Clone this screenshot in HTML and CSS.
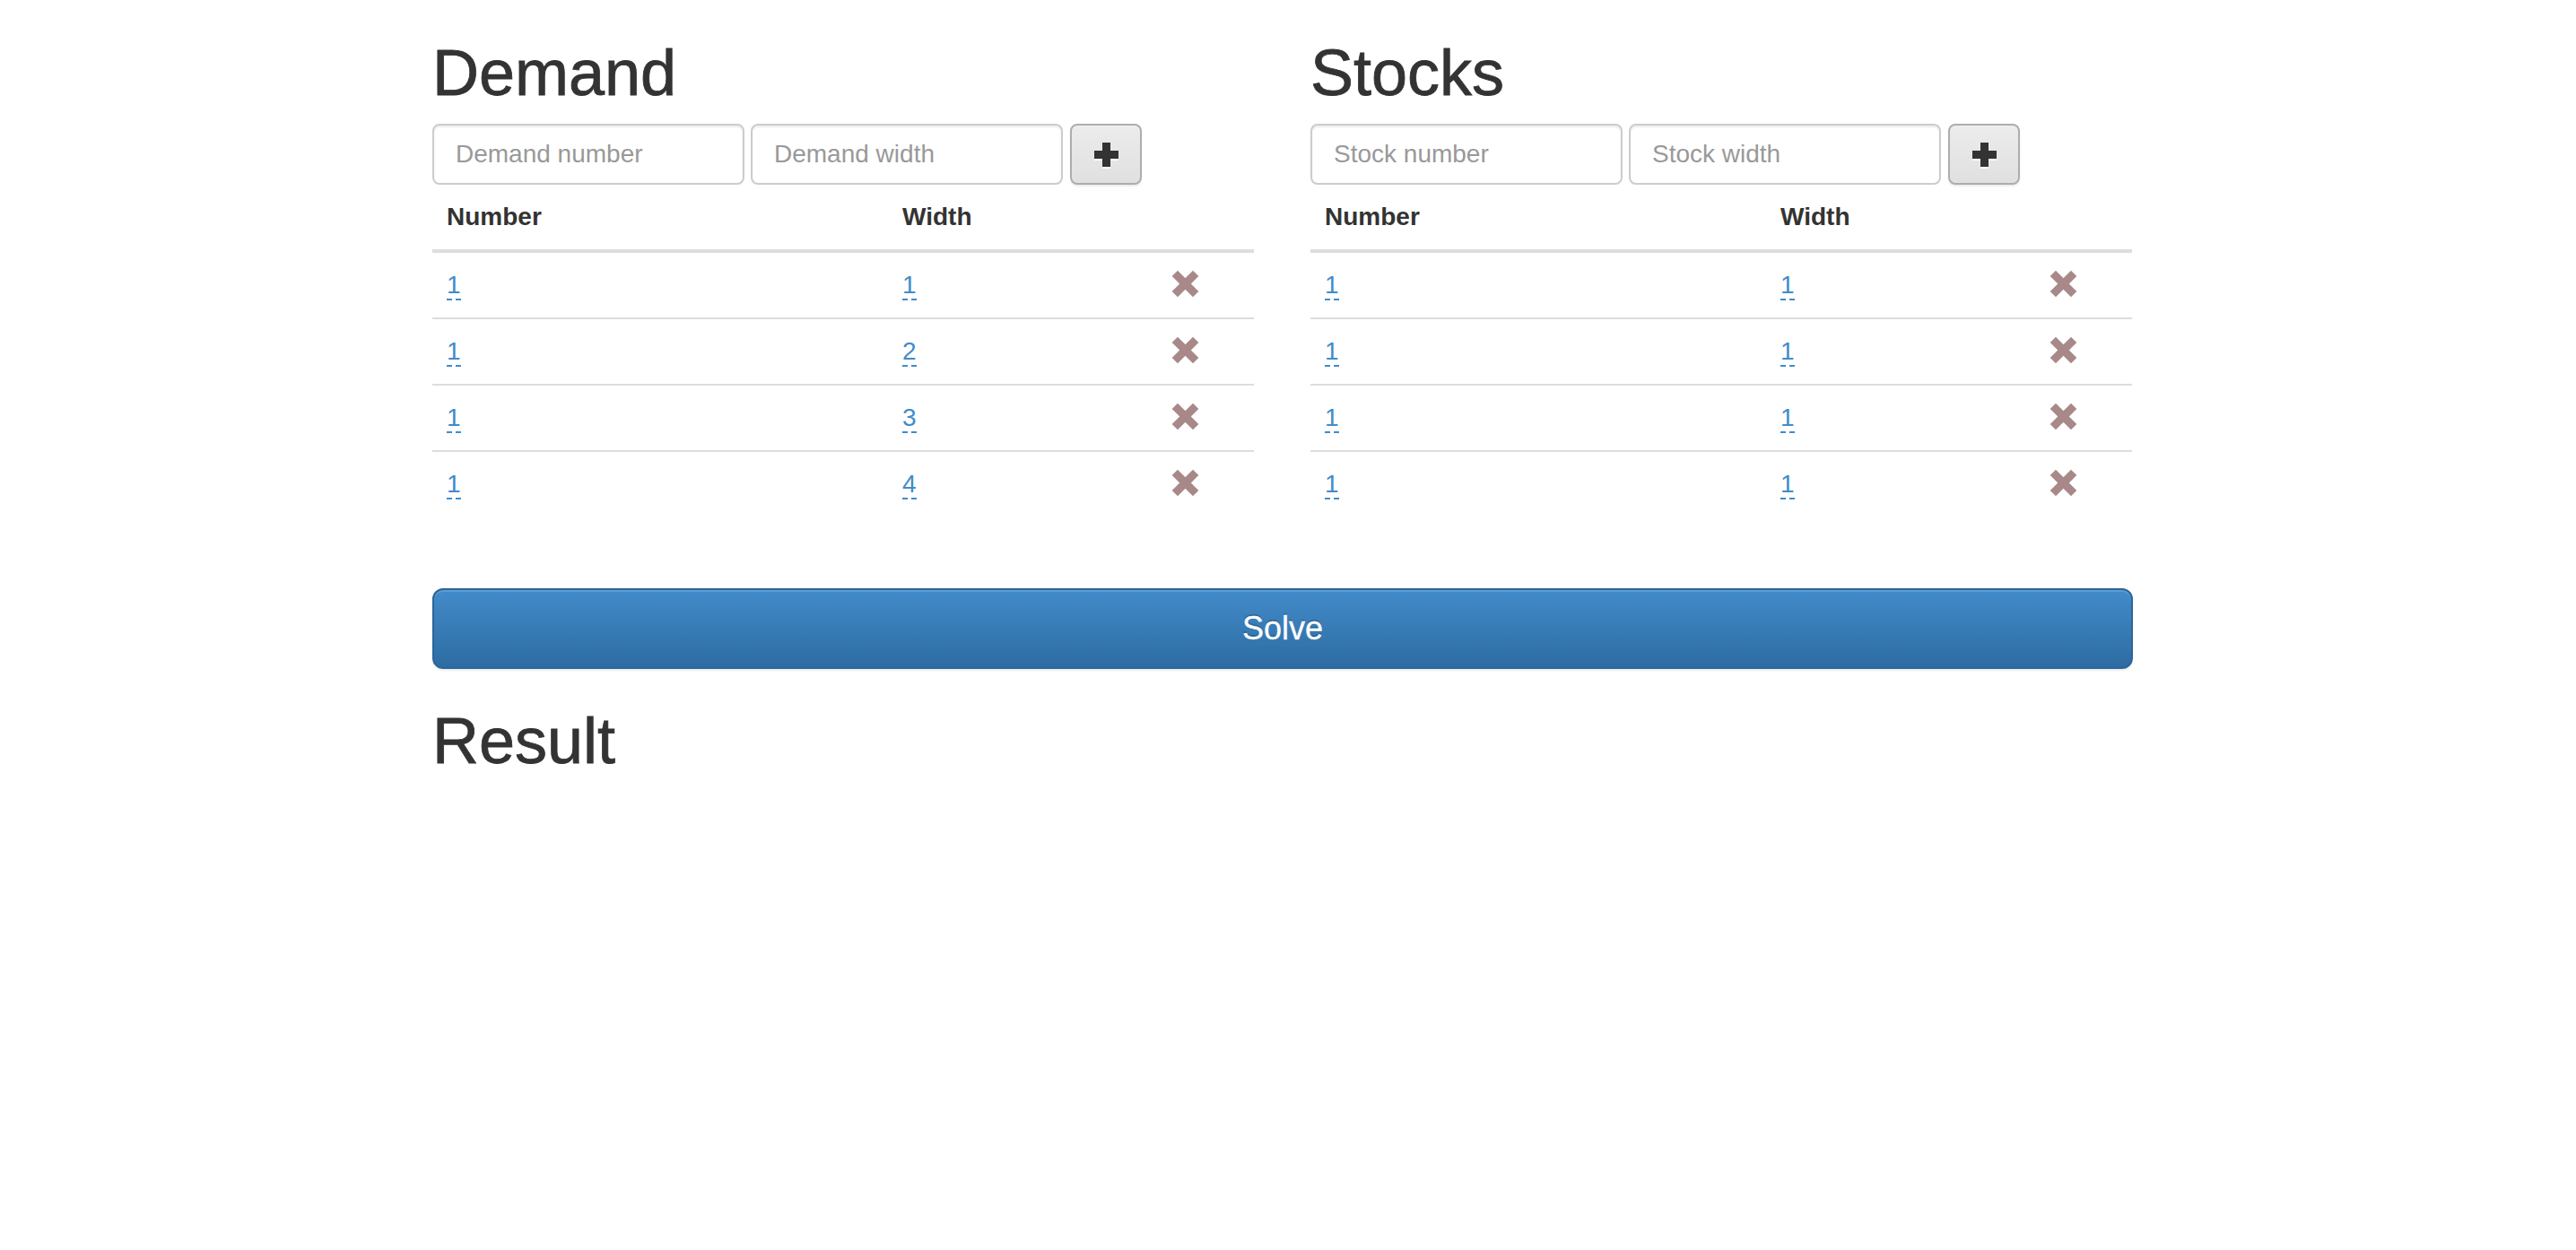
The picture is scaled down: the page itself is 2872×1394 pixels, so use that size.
FILE: index.html
```html
<!DOCTYPE html>
<html>
<head>
<meta charset="utf-8">
<title>Cutting stock</title>
<link rel="stylesheet" href="styles.css">
</head>
<body>
<div class="container">
  <div class="columns">
    <section class="col">
      <h1 class="heading">Demand</h1>
      <form class="add-form">
        <input class="field" type="text" placeholder="Demand number">
        <input class="field" type="text" placeholder="Demand width">
        <button class="btn-add" type="button" aria-label="Add">
          <svg class="plus" viewBox="0 0 27 27" width="27" height="27"><rect x="9" y="0" width="9" height="27"/><rect x="0" y="9" width="27" height="9"/></svg>
        </button>
      </form>
      <table class="data">
        <thead><tr><th class="c-num">Number</th><th class="c-wid">Width</th><th class="c-act"></th></tr></thead>
        <tbody>
          <tr><td><a class="editable">1</a></td><td><a class="editable">1</a></td><td><svg class="remove" viewBox="0 0 31 31" width="31" height="31"><g transform="rotate(45 15.5 15.5)"><rect x="11" y="-1" width="9" height="33"/><rect x="-1" y="11" width="33" height="9"/></g></svg></td></tr>
          <tr><td><a class="editable">1</a></td><td><a class="editable">2</a></td><td><svg class="remove" viewBox="0 0 31 31" width="31" height="31"><g transform="rotate(45 15.5 15.5)"><rect x="11" y="-1" width="9" height="33"/><rect x="-1" y="11" width="33" height="9"/></g></svg></td></tr>
          <tr><td><a class="editable">1</a></td><td><a class="editable">3</a></td><td><svg class="remove" viewBox="0 0 31 31" width="31" height="31"><g transform="rotate(45 15.5 15.5)"><rect x="11" y="-1" width="9" height="33"/><rect x="-1" y="11" width="33" height="9"/></g></svg></td></tr>
          <tr><td><a class="editable">1</a></td><td><a class="editable">4</a></td><td><svg class="remove" viewBox="0 0 31 31" width="31" height="31"><g transform="rotate(45 15.5 15.5)"><rect x="11" y="-1" width="9" height="33"/><rect x="-1" y="11" width="33" height="9"/></g></svg></td></tr>
        </tbody>
      </table>
    </section>
    <section class="col">
      <h1 class="heading">Stocks</h1>
      <form class="add-form">
        <input class="field" type="text" placeholder="Stock number">
        <input class="field" type="text" placeholder="Stock width">
        <button class="btn-add" type="button" aria-label="Add">
          <svg class="plus" viewBox="0 0 27 27" width="27" height="27"><rect x="9" y="0" width="9" height="27"/><rect x="0" y="9" width="27" height="9"/></svg>
        </button>
      </form>
      <table class="data">
        <thead><tr><th class="c-num">Number</th><th class="c-wid">Width</th><th class="c-act"></th></tr></thead>
        <tbody>
          <tr><td><a class="editable">1</a></td><td><a class="editable">1</a></td><td><svg class="remove" viewBox="0 0 31 31" width="31" height="31"><g transform="rotate(45 15.5 15.5)"><rect x="11" y="-1" width="9" height="33"/><rect x="-1" y="11" width="33" height="9"/></g></svg></td></tr>
          <tr><td><a class="editable">1</a></td><td><a class="editable">1</a></td><td><svg class="remove" viewBox="0 0 31 31" width="31" height="31"><g transform="rotate(45 15.5 15.5)"><rect x="11" y="-1" width="9" height="33"/><rect x="-1" y="11" width="33" height="9"/></g></svg></td></tr>
          <tr><td><a class="editable">1</a></td><td><a class="editable">1</a></td><td><svg class="remove" viewBox="0 0 31 31" width="31" height="31"><g transform="rotate(45 15.5 15.5)"><rect x="11" y="-1" width="9" height="33"/><rect x="-1" y="11" width="33" height="9"/></g></svg></td></tr>
          <tr><td><a class="editable">1</a></td><td><a class="editable">1</a></td><td><svg class="remove" viewBox="0 0 31 31" width="31" height="31"><g transform="rotate(45 15.5 15.5)"><rect x="11" y="-1" width="9" height="33"/><rect x="-1" y="11" width="33" height="9"/></g></svg></td></tr>
        </tbody>
      </table>
    </section>
  </div>
  <button class="btn-solve" type="button">Solve</button>
  <h1 class="heading result">Result</h1>
</div>
</body>
</html>
```

FILE: styles.css
```css
html, body {
  margin: 0;
  padding: 0;
  background: #fff;
}
body {
  font-family: "Liberation Sans", Helvetica, Arial, sans-serif;
  font-size: 28px;
  line-height: 40px;
  color: #333;
}
.container {
  width: 1896px;
  margin-left: 482px;
}
.columns {
  display: flex;
  gap: 63px;
}
.col {
  width: 916px;
}
.heading {
  font-size: 72px;
  line-height: 79px;
  font-weight: normal;
  margin: 42px 0 17px;
  color: #333;
  -webkit-text-stroke: 0.8px #333;
}
.add-form {
  display: flex;
  gap: 7px;
  height: 68px;
  margin: 0;
}
.field {
  box-sizing: border-box;
  width: 348px;
  height: 68px;
  padding: 12px 24px;
  border: 2px solid #ccc;
  border-radius: 8px;
  box-shadow: inset 0 2px 2px rgba(0,0,0,0.075);
  font-family: inherit;
  font-size: 28px;
  color: #555;
  background: #fff;
  outline: none;
}
.field::placeholder {
  color: #999;
}
.btn-add {
  box-sizing: border-box;
  width: 80px;
  height: 68px;
  margin-left: 1px;
  padding: 0;
  border: 2px solid #adadad;
  border-radius: 8px;
  background: linear-gradient(to bottom, #ececec 0%, #e0e0e0 100%);
  box-shadow: inset 0 2px 0 rgba(255,255,255,0.15), 0 2px 2px rgba(0,0,0,0.075);
  display: flex;
  align-items: center;
  justify-content: center;
}
.plus {
  fill: #333;
  filter: drop-shadow(0 2px 0 #fff);
}
.data {
  width: 100%;
  border-collapse: collapse;
  border-spacing: 0;
}
.data th {
  text-align: left;
  font-weight: bold;
  padding: 16px;
  line-height: 40px;
  border-bottom: 4px solid #ddd;
}
.data td {
  padding: 16px;
  line-height: 40px;
  border-top: 2px solid #ddd;
}
.c-num { width: 476px; }
.c-wid { width: 268px; }
.editable {
  color: #428bca;
  text-decoration: none;
  border-bottom: 2px dashed #428bca;
}
.remove {
  display: inline-block;
  vertical-align: -5px;
  fill: #a88888;
}
.btn-solve {
  display: block;
  box-sizing: border-box;
  width: 100%;
  height: 90px;
  margin-top: 80px;
  padding: 0;
  border: 2px solid #2b669a;
  border-radius: 12px;
  background: linear-gradient(to bottom, #428bca 0%, #2d6ca2 100%);
  box-shadow: inset 0 2px 0 rgba(255,255,255,0.15), 0 2px 2px rgba(0,0,0,0.075);
  color: #fff;
  font-family: inherit;
  font-size: 36px;
  text-shadow: 0 -2px 0 rgba(0,0,0,0.2);
  -webkit-text-stroke: 0.3px #fff;
}
.result {
  margin-top: 41px;
}
```
